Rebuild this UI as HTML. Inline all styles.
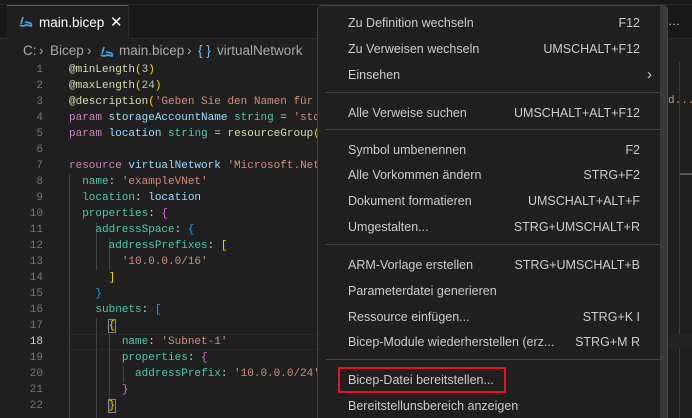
<!DOCTYPE html>
<html style="width:692px;height:418px;overflow:hidden"><head><meta charset="utf-8"><style>
*{margin:0;padding:0;box-sizing:border-box}
body{width:692px;height:418px;overflow:hidden;background:#1f1f1f;position:relative;font-family:"Liberation Sans",sans-serif}
.top{position:absolute;left:0;top:0;width:692px;height:5px;background:#181818;border-bottom:1px solid #2b2b2b}
.tabbar{position:absolute;left:0;top:5px;width:692px;height:34px;background:#181818;border-bottom:1px solid #2b2b2b}
.tab{position:absolute;left:7px;top:5px;width:122px;height:34px;background:#1f1f1f;border-top:1px solid #0078d4;border-right:1px solid #2b2b2b;color:#fff;font-size:13.5px}
.cr{position:absolute;top:43px;font-size:13.5px;color:#a9a9a9;white-space:pre}
.ln{position:absolute;left:0;width:43px;text-align:right;font-family:"Liberation Mono",monospace;font-size:11px;color:#6e7681;line-height:16px}
.code{position:absolute;left:69px;font-family:"Liberation Mono",monospace;font-size:11px;line-height:16px;white-space:pre;color:#d4d4d4}
.k{color:#c586c0}.v{color:#9cdcfe}.t{color:#4ec9b0}.s{color:#ce9178}.d{color:#dcdcaa}.y{color:#ffd700}.p{color:#da70d6}.b{color:#179fff}.f{color:#dcdcaa}
.guide{position:absolute;width:1px;background:#404040}
.menu{position:absolute;left:317px;top:5px;width:351px;height:413px;background:#1f1f1f;border:1px solid #454545;border-bottom:none;border-radius:5px 5px 0 0;color:#cccccc;font-size:12.5px;overflow:hidden}
.sb{position:absolute;right:0;top:0;width:7px;height:100%;background:#3a3a3a}
.it{position:absolute;left:30px;width:292px;height:20px;line-height:20px}
.it span{position:absolute;right:0;top:0}
.sep{position:absolute;left:8px;width:336px;height:1px;background:#454545}
</style></head><body>
<div class="top"></div>
<div class="tabbar"></div>
<div class="tab">
<svg style="position:absolute;left:12px;top:10px" width="14" height="12" viewBox="0 0 14 12"><path d="M4 1 L2 8 M1 9 Q4 11 7 9 L12 10 Q13 8 11 7 L6 6" stroke="#4a9fd8" stroke-width="1.8" fill="none"/></svg>
<span style="position:absolute;left:32px;top:9px">main.bicep</span>
<span style="position:absolute;left:103px;top:7px;font-size:15px">✕</span>
</div>
<span class="cr" style="left:23px">C:</span>
<span class="cr" style="left:39px">›</span>
<span class="cr" style="left:50px">Bicep</span>
<span class="cr" style="left:87px">›</span>
<svg style="position:absolute;left:100px;top:46px" width="14" height="12" viewBox="0 0 14 12"><path d="M4 1 L2 8 M1 9 Q4 11 7 9 L12 10 Q13 8 11 7 L6 6" stroke="#4a9fd8" stroke-width="1.8" fill="none"/></svg>
<span class="cr" style="left:119px">main.bicep</span>
<span class="cr" style="left:187px">›</span>
<span class="cr" style="left:198px;color:#75beff">{ }</span>
<span class="cr" style="left:217px">virtualNetwork</span>

<div class="ln" style="top:62px">1<br>2<br>3<br>4<br>5<br>6<br>7<br>8<br>9<br>10<br>11<br>12<br>13<br>14<br>15<br>16<br>17<br><span style="color:#ccc">18</span><br>19<br>20<br>21<br>22</div>
<div style="position:absolute;left:70px;top:334px;width:252px;height:16px;border-top:1px solid #282828;border-bottom:1px solid #282828"></div>
<div class="guide" style="left:69px;top:174px;height:250px"></div>
<div class="guide" style="left:96px;top:222px;height:48px"></div>
<div class="guide" style="left:109px;top:238px;height:32px"></div>
<div class="guide" style="left:96px;top:318px;height:110px"></div>
<div class="guide" style="left:109px;top:334px;height:80px"></div>
<div class="guide" style="left:123px;top:366px;height:16px"></div>
<div class="code" style="top:62px"><span class="d">@minLength</span><span class="y">(</span><span style="color:#b5cea8">3</span><span class="y">)</span>
<span class="d">@maxLength</span><span class="y">(</span><span style="color:#b5cea8">24</span><span class="y">)</span>
<span class="d">@description</span><span class="y">(</span><span class="s">'Geben Sie den Namen für d</span>
<span class="k">param</span> <span class="v">storageAccountName</span> <span class="t">string</span> = <span class="s">'sto</span>
<span class="k">param</span> <span class="v">location</span> <span class="t">string</span> = <span class="f">resourceGroup</span><span class="y">(</span>

<span class="k">resource</span> <span class="v">virtualNetwork</span> <span class="s">'Microsoft.Net</span>
  <span class="t">name</span>: <span class="s">'exampleVNet'</span>
  <span class="t">location</span>: <span class="v">location</span>
  <span class="t">properties</span>: <span class="p">{</span>
    <span class="t">addressSpace</span>: <span class="b">{</span>
      <span class="t">addressPrefixes</span>: <span class="y">[</span>
        <span class="s">'10.0.0.0/16'</span>
      <span class="y">]</span>
    <span class="b">}</span>
    <span class="t">subnets</span>: <span class="b">[</span>
      <span class="y" style="outline:1px solid #888">{</span>
        <span class="t">name</span>: <span class="s">'Subnet-1'</span>
        <span class="t">properties</span>: <span class="p">{</span>
          <span class="t">addressPrefix</span>: <span class="s">'10.0.0.0/24'</span>
        <span class="p">}</span>
      <span class="y" style="outline:1px solid #888">}</span></div>

<div style="position:absolute;left:668px;top:14px;color:#ccc;font-size:12px">…</div>
<div style="position:absolute;left:668px;top:95px;color:#ce9178;font-family:'Liberation Mono',monospace;font-size:11px">d...</div>
<div style="position:absolute;left:679px;top:62px;width:1px;height:360px;background:#3a3a3a"></div>
<div style="position:absolute;left:680px;top:173px;width:12px;height:2px;background:#555"></div>
<div style="position:absolute;left:668px;top:334px;width:24px;height:14px;background:#232323"></div>

<div class="menu">
<div class="sb"></div>
<div class="it" style="top:7px">Zu Definition wechseln<span>F12</span></div>
<div class="it" style="top:33px">Zu Verweisen wechseln<span>UMSCHALT+F12</span></div>
<div class="it" style="top:59px">Einsehen<span style="right:-12px;font-size:15px">›</span></div>
<div class="sep" style="top:86px"></div>
<div class="it" style="top:97px">Alle Verweise suchen<span>UMSCHALT+ALT+F12</span></div>
<div class="sep" style="top:123px"></div>
<div class="it" style="top:134px">Symbol umbenennen<span>F2</span></div>
<div class="it" style="top:159px">Alle Vorkommen ändern<span>STRG+F2</span></div>
<div class="it" style="top:185px">Dokument formatieren<span>UMSCHALT+ALT+F</span></div>
<div class="it" style="top:211px">Umgestalten...<span>STRG+UMSCHALT+R</span></div>
<div class="sep" style="top:238px"></div>
<div class="it" style="top:249px">ARM-Vorlage erstellen<span>STRG+UMSCHALT+B</span></div>
<div class="it" style="top:275px">Parameterdatei generieren</div>
<div class="it" style="top:301px">Ressource einfügen...<span>STRG+K I</span></div>
<div class="it" style="top:326px">Bicep-Module wiederherstellen (erz...<span>STRG+M R</span></div>
<div class="sep" style="top:353px"></div>
<div class="it" style="top:364px">Bicep-Datei bereitstellen...</div>
<div style="position:absolute;left:20px;top:361px;width:168px;height:26px;border:2px solid #e81123"></div>
<div class="it" style="top:390px">Bereitstellunsbereich anzeigen</div>
</div>
</body></html>
